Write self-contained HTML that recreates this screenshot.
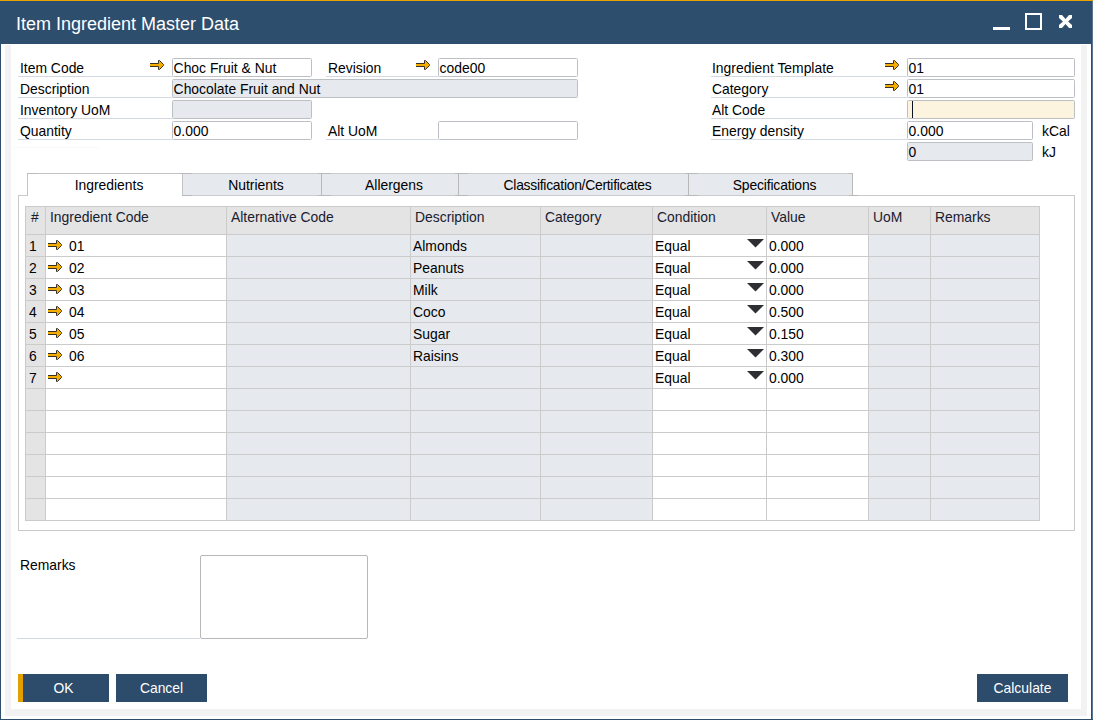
<!DOCTYPE html>
<html><head><meta charset="utf-8">
<style>
*{margin:0;padding:0;box-sizing:border-box}
html,body{width:1093px;height:720px;overflow:hidden;background:#fff}
body{position:relative;font-family:"Liberation Sans",sans-serif;font-size:13.9px;color:#000}
.a{position:absolute}
.t{position:absolute;white-space:nowrap;line-height:16px}
.title{left:0;top:0;width:1093px;height:44px;background:#2d4e6d;border-top:1px solid #eca300}
.title .ln{position:absolute;left:0;top:0;width:1093px;height:1px;background:#284e74}
.ttxt{left:16px;top:13px;font-size:18px;color:#fff;line-height:22px}
.lb{position:absolute;height:1px;background:#d3d9e0}
.in{position:absolute;height:19px;border:1px solid #bcbfc3;border-radius:1.5px;background:#fff}
.in.g{background:#e6e9ed}
.in.c{background:#fdf4df}
.in span{position:absolute;left:0.6px;top:1px;line-height:16px;white-space:nowrap}
.arr{position:absolute;width:15px;height:11px}
.tab{position:absolute;top:173px;height:23px;background:#e6e9ed;border:1px solid #cbcbcb;border-left-color:#b9b9b9;border-right-color:#b9b9b9;text-align:center;line-height:23px;padding-left:8px}
.btn{position:absolute;top:674px;height:28px;width:91px;background:#2d4b6b;color:#fff;text-align:center;line-height:29px}
.gl{position:absolute;background:#cbcbcb}
.gtxt{position:absolute;white-space:nowrap;line-height:16px}
.hd{color:#182030}
.tri{position:absolute;width:0;height:0;border-left:8px solid transparent;border-right:8px solid transparent;border-top:8px solid #2e2e2e}
</style></head><body>
<!-- window frame -->
<div class="a title"><div class="ln"></div></div>
<div class="t ttxt">Item Ingredient Master Data</div>
<!-- title buttons -->
<div class="a" style="left:993px;top:27px;width:17px;height:3px;background:#fff"></div>
<div class="a" style="left:1025px;top:13px;width:17px;height:17px;border:2px solid #fff"></div>
<svg class="a" style="left:1059px;top:15px" width="13" height="13" viewBox="0 0 13 13"><path d="M0 0H3L6.5 3.9L10 0H13V3L9.1 6.5L13 10V13H10L6.5 9.1L3 13H0V10L3.9 6.5L0 3Z" fill="#fff"/></svg>
<div class="a" style="left:0;top:44px;width:1px;height:676px;background:#2d4e6d"></div>
<div class="a" style="left:1091px;top:1px;width:1px;height:719px;background:#2d4e6d"></div>
<div class="a" style="left:1092px;top:1px;width:1px;height:719px;background:#587690"></div>
<div class="a" style="left:0;top:719px;width:1093px;height:1px;background:#2d4e6d"></div>
<!-- inner gray strips -->
<div class="a" style="left:5px;top:45px;width:6px;height:671px;background:#f2f2f2"></div>
<div class="a" style="left:1081px;top:45px;width:6px;height:671px;background:#f2f2f2"></div>
<div class="a" style="left:5px;top:709px;width:1082px;height:7px;background:#f2f2f2"></div>

<!-- FORM -->
<div class="a" style="left:13px;top:147px;width:86px;height:1px;background:#f9f9f9"></div>
<div class="lb" style="left:18px;top:76px;width:154px"></div>
<div class="t" style="left:20px;top:60px">Item Code</div>
<div class="lb" style="left:18px;top:97px;width:154px"></div>
<div class="t" style="left:20px;top:81px">Description</div>
<div class="lb" style="left:18px;top:118px;width:154px"></div>
<div class="t" style="left:20px;top:102px">Inventory UoM</div>
<div class="lb" style="left:18px;top:139px;width:154px"></div>
<div class="t" style="left:20px;top:123px">Quantity</div>
<svg class="a" style="left:150px;top:60px" width="14" height="10" viewBox="0 0 14 10"><path d="M0 3.5H8.5V0.5H9.5L13.5 4.5V5.5L9.5 9.5H8.5V6.5H0" fill="#f5ae00" stroke="#3b3024" stroke-width="1"/></svg>
<div class="in" style="left:172px;top:58px;width:140px"><span>Choc Fruit &amp; Nut</span></div>
<div class="in g" style="left:172px;top:79px;width:406px"><span>Chocolate Fruit and Nut</span></div>
<div class="in g" style="left:172px;top:100px;width:140px"></div>
<div class="in" style="left:172px;top:121px;width:140px"><span>0.000</span></div>
<div class="lb" style="left:326px;top:76px;width:112px"></div>
<div class="t" style="left:328px;top:60px">Revision</div>
<svg class="a" style="left:416px;top:60px" width="14" height="10" viewBox="0 0 14 10"><path d="M0 3.5H8.5V0.5H9.5L13.5 4.5V5.5L9.5 9.5H8.5V6.5H0" fill="#f5ae00" stroke="#3b3024" stroke-width="1"/></svg>
<div class="in" style="left:438px;top:58px;width:140px"><span>code00</span></div>
<div class="lb" style="left:326px;top:139px;width:112px"></div>
<div class="t" style="left:328px;top:123px">Alt UoM</div>
<div class="in" style="left:438px;top:121px;width:140px"><span></span></div>
<div class="lb" style="left:711px;top:76px;width:196px"></div>
<div class="t" style="left:712px;top:60px">Ingredient Template</div>
<div class="lb" style="left:711px;top:97px;width:196px"></div>
<div class="t" style="left:712px;top:81px">Category</div>
<div class="lb" style="left:711px;top:118px;width:196px"></div>
<div class="t" style="left:712px;top:102px">Alt Code</div>
<div class="lb" style="left:711px;top:139px;width:196px"></div>
<div class="t" style="left:712px;top:123px">Energy density</div>
<svg class="a" style="left:885px;top:60px" width="14" height="10" viewBox="0 0 14 10"><path d="M0 3.5H8.5V0.5H9.5L13.5 4.5V5.5L9.5 9.5H8.5V6.5H0" fill="#f5ae00" stroke="#3b3024" stroke-width="1"/></svg>
<svg class="a" style="left:885px;top:81px" width="14" height="10" viewBox="0 0 14 10"><path d="M0 3.5H8.5V0.5H9.5L13.5 4.5V5.5L9.5 9.5H8.5V6.5H0" fill="#f5ae00" stroke="#3b3024" stroke-width="1"/></svg>
<div class="in" style="left:907px;top:58px;width:168px"><span>01</span></div>
<div class="in" style="left:907px;top:79px;width:168px"><span>01</span></div>
<div class="in c" style="left:907px;top:100px;width:168px"><div class="a" style="left:4px;top:0px;width:1px;height:17px;background:#0d1426"></div></div>
<div class="in" style="left:907px;top:121px;width:126px"><span>0.000</span></div>
<div class="in g" style="left:907px;top:142px;width:126px"><span>0</span></div>
<div class="t" style="left:1042px;top:123px">kCal</div>
<div class="t" style="left:1042px;top:144px">kJ</div>
<!-- /FORM -->
<!-- GRID -->
<div class="a" style="left:18px;top:195px;width:1057px;height:336px;border:1px solid #c9c9c9"></div>
<div class="tab" style="left:182px;width:140px">Nutrients</div>
<div class="tab" style="left:321px;width:138px">Allergens</div>
<div class="tab" style="left:458px;width:231px;letter-spacing:-0.27px">Classification/Certificates</div>
<div class="tab" style="left:688px;width:165px;letter-spacing:-0.15px">Specifications</div>
<div class="a" style="left:27px;top:173px;width:156px;height:23px;background:#fff;border:1px solid #c4c4c4;border-bottom:none"></div>
<div class="a" style="left:179px;top:173px;width:13px;height:1px;background:#b9b9b9"></div>
<div class="a" style="left:182px;top:195px;width:10px;height:1px;background:#b9b9b9"></div>
<div class="a" style="left:318px;top:173px;width:13px;height:1px;background:#b9b9b9"></div>
<div class="a" style="left:318px;top:195px;width:13px;height:1px;background:#b9b9b9"></div>
<div class="a" style="left:455px;top:173px;width:13px;height:1px;background:#b9b9b9"></div>
<div class="a" style="left:455px;top:195px;width:13px;height:1px;background:#b9b9b9"></div>
<div class="a" style="left:685px;top:173px;width:13px;height:1px;background:#b9b9b9"></div>
<div class="a" style="left:685px;top:195px;width:13px;height:1px;background:#b9b9b9"></div>
<div class="a" style="left:849px;top:173px;width:4px;height:1px;background:#b9b9b9"></div>
<div class="a" style="left:849px;top:195px;width:9px;height:1px;background:#b9b9b9"></div>
<div class="a" style="left:27px;top:173px;width:11px;height:1px;background:#bdbdbd"></div>
<div class="t" style="left:35px;top:177px;width:148px;text-align:center">Ingredients</div>
<div class="a" style="left:25px;top:234px;width:20px;height:286px;background:#e4e4e4"></div>
<div class="a" style="left:45px;top:234px;width:181px;height:286px;background:#fff"></div>
<div class="a" style="left:226px;top:234px;width:184px;height:286px;background:#e6eaee"></div>
<div class="a" style="left:410px;top:234px;width:130px;height:286px;background:#e6eaee"></div>
<div class="a" style="left:540px;top:234px;width:112px;height:286px;background:#e6eaee"></div>
<div class="a" style="left:652px;top:234px;width:114px;height:286px;background:#fff"></div>
<div class="a" style="left:766px;top:234px;width:102px;height:286px;background:#fff"></div>
<div class="a" style="left:868px;top:234px;width:62px;height:286px;background:#e6eaee"></div>
<div class="a" style="left:930px;top:234px;width:109px;height:286px;background:#e6eaee"></div>
<div class="a" style="left:25px;top:206px;width:1014px;height:28px;background:#e4e4e4"></div>
<div class="gl" style="left:25px;top:206px;width:1015px;height:1px"></div>
<div class="gl" style="left:25px;top:234px;width:1015px;height:1px"></div>
<div class="gl" style="left:25px;top:256px;width:1015px;height:1px"></div>
<div class="gl" style="left:25px;top:278px;width:1015px;height:1px"></div>
<div class="gl" style="left:25px;top:300px;width:1015px;height:1px"></div>
<div class="gl" style="left:25px;top:322px;width:1015px;height:1px"></div>
<div class="gl" style="left:25px;top:344px;width:1015px;height:1px"></div>
<div class="gl" style="left:25px;top:366px;width:1015px;height:1px"></div>
<div class="gl" style="left:25px;top:388px;width:1015px;height:1px"></div>
<div class="gl" style="left:25px;top:410px;width:1015px;height:1px"></div>
<div class="gl" style="left:25px;top:432px;width:1015px;height:1px"></div>
<div class="gl" style="left:25px;top:454px;width:1015px;height:1px"></div>
<div class="gl" style="left:25px;top:476px;width:1015px;height:1px"></div>
<div class="gl" style="left:25px;top:498px;width:1015px;height:1px"></div>
<div class="gl" style="left:25px;top:520px;width:1015px;height:1px"></div>
<div class="gl" style="left:25px;top:206px;width:1px;height:315px"></div>
<div class="gl" style="left:45px;top:206px;width:1px;height:315px"></div>
<div class="gl" style="left:226px;top:206px;width:1px;height:315px"></div>
<div class="gl" style="left:410px;top:206px;width:1px;height:315px"></div>
<div class="gl" style="left:540px;top:206px;width:1px;height:315px"></div>
<div class="gl" style="left:652px;top:206px;width:1px;height:315px"></div>
<div class="gl" style="left:766px;top:206px;width:1px;height:315px"></div>
<div class="gl" style="left:868px;top:206px;width:1px;height:315px"></div>
<div class="gl" style="left:930px;top:206px;width:1px;height:315px"></div>
<div class="gl" style="left:1039px;top:206px;width:1px;height:315px"></div>
<div class="gtxt hd" style="left:31px;top:209px">#</div>
<div class="gtxt hd" style="left:50px;top:209px">Ingredient Code</div>
<div class="gtxt hd" style="left:231px;top:209px">Alternative Code</div>
<div class="gtxt hd" style="left:415px;top:209px">Description</div>
<div class="gtxt hd" style="left:545px;top:209px">Category</div>
<div class="gtxt hd" style="left:657px;top:209px">Condition</div>
<div class="gtxt hd" style="left:771px;top:209px">Value</div>
<div class="gtxt hd" style="left:873px;top:209px">UoM</div>
<div class="gtxt hd" style="left:935px;top:209px">Remarks</div>
<div class="gtxt" style="left:29px;top:238px">1</div>
<svg class="a" style="left:48px;top:240px" width="14" height="10" viewBox="0 0 14 10"><path d="M0 3.5H8.5V0.5H9.5L13.5 4.5V5.5L9.5 9.5H8.5V6.5H0" fill="#f5ae00" stroke="#3b3024" stroke-width="1"/></svg>
<div class="gtxt" style="left:69px;top:238px">01</div>
<div class="gtxt" style="left:413px;top:238px">Almonds</div>
<div class="gtxt" style="left:655px;top:238px">Equal</div>
<svg class="a" style="left:747px;top:239px" width="17" height="9" viewBox="0 0 17 9"><path d="M0 0H17L8.5 8.5Z" fill="#2e2f33"/></svg>
<div class="gtxt" style="left:769px;top:238px">0.000</div>
<div class="gtxt" style="left:29px;top:260px">2</div>
<svg class="a" style="left:48px;top:262px" width="14" height="10" viewBox="0 0 14 10"><path d="M0 3.5H8.5V0.5H9.5L13.5 4.5V5.5L9.5 9.5H8.5V6.5H0" fill="#f5ae00" stroke="#3b3024" stroke-width="1"/></svg>
<div class="gtxt" style="left:69px;top:260px">02</div>
<div class="gtxt" style="left:413px;top:260px">Peanuts</div>
<div class="gtxt" style="left:655px;top:260px">Equal</div>
<svg class="a" style="left:747px;top:261px" width="17" height="9" viewBox="0 0 17 9"><path d="M0 0H17L8.5 8.5Z" fill="#2e2f33"/></svg>
<div class="gtxt" style="left:769px;top:260px">0.000</div>
<div class="gtxt" style="left:29px;top:282px">3</div>
<svg class="a" style="left:48px;top:284px" width="14" height="10" viewBox="0 0 14 10"><path d="M0 3.5H8.5V0.5H9.5L13.5 4.5V5.5L9.5 9.5H8.5V6.5H0" fill="#f5ae00" stroke="#3b3024" stroke-width="1"/></svg>
<div class="gtxt" style="left:69px;top:282px">03</div>
<div class="gtxt" style="left:413px;top:282px">Milk</div>
<div class="gtxt" style="left:655px;top:282px">Equal</div>
<svg class="a" style="left:747px;top:283px" width="17" height="9" viewBox="0 0 17 9"><path d="M0 0H17L8.5 8.5Z" fill="#2e2f33"/></svg>
<div class="gtxt" style="left:769px;top:282px">0.000</div>
<div class="gtxt" style="left:29px;top:304px">4</div>
<svg class="a" style="left:48px;top:306px" width="14" height="10" viewBox="0 0 14 10"><path d="M0 3.5H8.5V0.5H9.5L13.5 4.5V5.5L9.5 9.5H8.5V6.5H0" fill="#f5ae00" stroke="#3b3024" stroke-width="1"/></svg>
<div class="gtxt" style="left:69px;top:304px">04</div>
<div class="gtxt" style="left:413px;top:304px">Coco</div>
<div class="gtxt" style="left:655px;top:304px">Equal</div>
<svg class="a" style="left:747px;top:305px" width="17" height="9" viewBox="0 0 17 9"><path d="M0 0H17L8.5 8.5Z" fill="#2e2f33"/></svg>
<div class="gtxt" style="left:769px;top:304px">0.500</div>
<div class="gtxt" style="left:29px;top:326px">5</div>
<svg class="a" style="left:48px;top:328px" width="14" height="10" viewBox="0 0 14 10"><path d="M0 3.5H8.5V0.5H9.5L13.5 4.5V5.5L9.5 9.5H8.5V6.5H0" fill="#f5ae00" stroke="#3b3024" stroke-width="1"/></svg>
<div class="gtxt" style="left:69px;top:326px">05</div>
<div class="gtxt" style="left:413px;top:326px">Sugar</div>
<div class="gtxt" style="left:655px;top:326px">Equal</div>
<svg class="a" style="left:747px;top:327px" width="17" height="9" viewBox="0 0 17 9"><path d="M0 0H17L8.5 8.5Z" fill="#2e2f33"/></svg>
<div class="gtxt" style="left:769px;top:326px">0.150</div>
<div class="gtxt" style="left:29px;top:348px">6</div>
<svg class="a" style="left:48px;top:350px" width="14" height="10" viewBox="0 0 14 10"><path d="M0 3.5H8.5V0.5H9.5L13.5 4.5V5.5L9.5 9.5H8.5V6.5H0" fill="#f5ae00" stroke="#3b3024" stroke-width="1"/></svg>
<div class="gtxt" style="left:69px;top:348px">06</div>
<div class="gtxt" style="left:413px;top:348px">Raisins</div>
<div class="gtxt" style="left:655px;top:348px">Equal</div>
<svg class="a" style="left:747px;top:349px" width="17" height="9" viewBox="0 0 17 9"><path d="M0 0H17L8.5 8.5Z" fill="#2e2f33"/></svg>
<div class="gtxt" style="left:769px;top:348px">0.300</div>
<div class="gtxt" style="left:29px;top:370px">7</div>
<svg class="a" style="left:48px;top:372px" width="14" height="10" viewBox="0 0 14 10"><path d="M0 3.5H8.5V0.5H9.5L13.5 4.5V5.5L9.5 9.5H8.5V6.5H0" fill="#f5ae00" stroke="#3b3024" stroke-width="1"/></svg>
<div class="gtxt" style="left:655px;top:370px">Equal</div>
<svg class="a" style="left:747px;top:371px" width="17" height="9" viewBox="0 0 17 9"><path d="M0 0H17L8.5 8.5Z" fill="#2e2f33"/></svg>
<div class="gtxt" style="left:769px;top:370px">0.000</div>
<div class="lb" style="left:17px;top:638px;width:183px"></div>
<div class="t" style="left:20px;top:557px">Remarks</div>
<div class="a" style="left:200px;top:555px;width:168px;height:84px;border:1px solid #b8b8b8;border-radius:2px"></div>
<div class="btn" style="left:18px">OK</div><div class="a" style="left:18px;top:674px;width:5px;height:28px;background:#e39f00"></div>
<div class="btn" style="left:116px">Cancel</div>
<div class="btn" style="left:977px">Calculate</div>
<!-- /GRID -->
</body></html>
